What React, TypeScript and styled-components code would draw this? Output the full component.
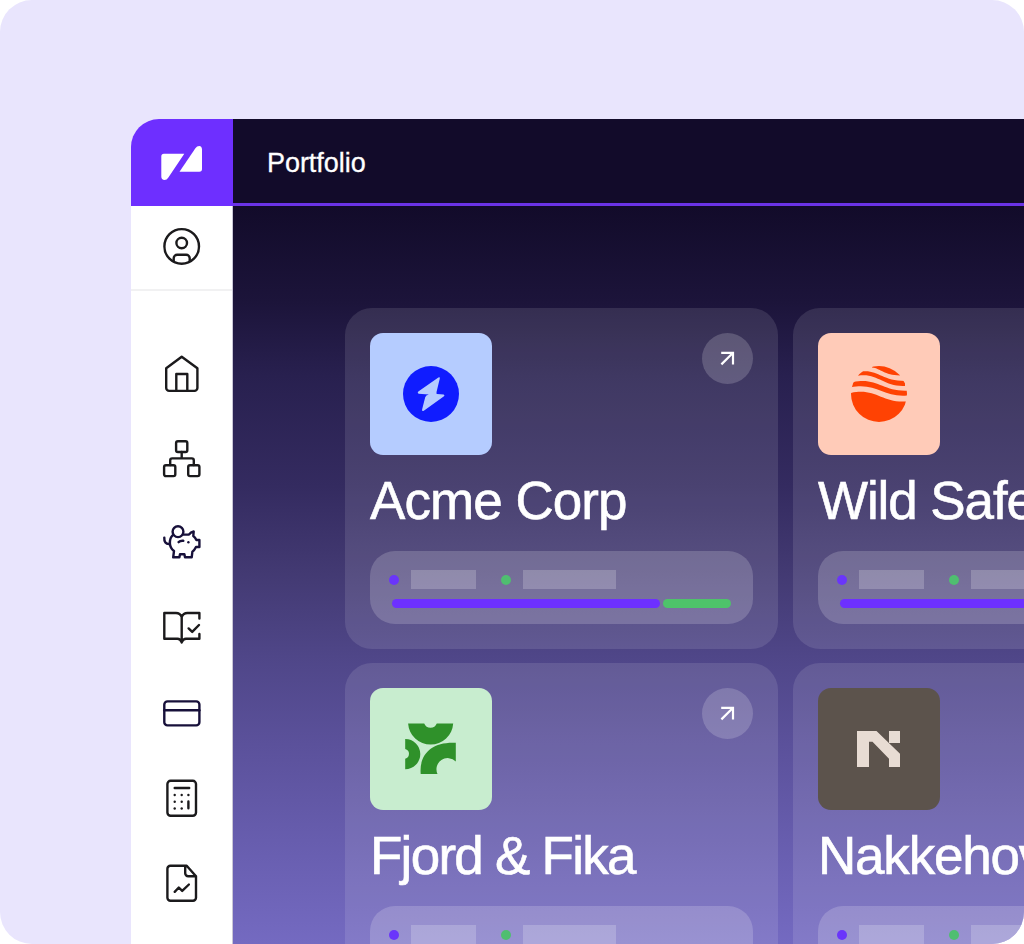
import React from 'react';
import styled, { createGlobalStyle } from 'styled-components';

const GlobalStyle = createGlobalStyle`
  * { box-sizing: border-box; }
  body { margin: 0; background: #fff; font-family: "Liberation Sans", Arial, sans-serif; }
`;

const Stage = styled.main`
  width: 1024px;
  height: 944px;
  padding: 119px 0 0 131px;
  background: #e9e5fd;
  border-radius: 32px;
  overflow: hidden;
`;

const Window = styled.div`
  display: flex;
  width: 1130px;
  height: 825px;
  border-top-left-radius: 28px;
  overflow: hidden;
`;

const Sidebar = styled.aside`
  flex: none;
  width: 102px;
  background: #fff;
  border-right: 1px solid #c9c6d6;
`;

const Brand = styled.div`
  display: flex;
  align-items: center;
  justify-content: center;
  width: 102px;
  height: 87px;
  background: #6e2fff;
`;

const Account = styled.div`
  display: flex;
  justify-content: center;
  height: 85px;
  padding-top: 20px;
  border-bottom: 2px solid #f1f1f2;
`;

const Nav = styled.nav`
  display: flex;
  flex-direction: column;
  align-items: center;
  gap: 45px;
  padding-top: 63px;
`;

const Icon = styled.svg<{ $navy?: boolean }>`
  display: block;
  flex: none;
  width: 40px;
  height: 40px;
  fill: none;
  stroke: ${(p) => (p.$navy ? '#17103a' : '#1b1a1c')};
  stroke-width: 2.4;
  stroke-linecap: round;
  stroke-linejoin: round;
`;

const Main = styled.section`
  flex: 1;
  display: flex;
  flex-direction: column;
`;

const Header = styled.header`
  flex: none;
  display: flex;
  align-items: center;
  height: 87px;
  padding-left: 34px;
  background: #120b2a;
  border-bottom: 3px solid #6a33e6;
`;

const PageTitle = styled.h1`
  margin: 0;
  padding-top: 4px;
  color: #fff;
  font-size: 27px;
  font-weight: 400;
  line-height: 32px;
  letter-spacing: -0.05px;
  -webkit-text-stroke: 0.3px #fff;
`;

const Content = styled.div`
  flex: 1;
  min-height: 0;
  padding: 102px 0 0 112px;
  background: linear-gradient(
    180deg,
    #120b2a 0%,
    #1c143a 13%,
    #28204f 23%,
    #342b60 38%,
    #433a73 50%,
    #4f4688 61%,
    #5b519b 73%,
    #675dae 86%,
    #746ac1 100%
  );
`;

const Grid = styled.div`
  display: grid;
  grid-template-columns: 433px 433px;
  grid-auto-rows: 341px;
  gap: 14px 15px;
`;

const Card = styled.article`
  padding: 25px;
  border-radius: 27px;
  background: rgba(255, 255, 255, 0.11);
`;

const CardTop = styled.div`
  display: flex;
  justify-content: space-between;
  align-items: flex-start;
`;

const Tile = styled.div<{ $color: string }>`
  display: flex;
  align-items: center;
  justify-content: center;
  width: 122px;
  height: 122px;
  border-radius: 13px;
  background: ${(p) => p.$color};
`;

const OpenButton = styled.button`
  display: flex;
  align-items: center;
  justify-content: center;
  width: 51px;
  height: 51px;
  padding: 0;
  border: 0;
  border-radius: 50%;
  background: rgba(255, 255, 255, 0.18);
`;

const CompanyName = styled.h2<{ $tracking: number }>`
  margin: 16px 0 20px;
  color: #fff;
  font-size: 53px;
  font-weight: 400;
  line-height: 60px;
  letter-spacing: ${(p) => p.$tracking}px;
  white-space: nowrap;
  -webkit-text-stroke: 0.6px #fff;
`;

const Meter = styled.div`
  height: 73px;
  padding: 19px 22px 0 19px;
  border-radius: 25px;
  background: rgba(255, 255, 255, 0.18);
`;

const Legend = styled.div`
  display: flex;
  align-items: center;
  height: 19px;
`;

const Dot = styled.span<{ $color: string }>`
  width: 10px;
  height: 10px;
  border-radius: 50%;
  background: ${(p) => p.$color};
`;

const Label = styled.span<{ $width: number; $after?: number }>`
  width: ${(p) => p.$width}px;
  height: 19px;
  margin-left: 12px;
  margin-right: ${(p) => p.$after ?? 0}px;
  background: rgba(255, 255, 255, 0.2);
`;

const Track = styled.div`
  display: flex;
  gap: 3.5px;
  margin: 9.5px 0 0 3px;
`;

const Segment = styled.span<{ $width: number; $color: string }>`
  width: ${(p) => p.$width}px;
  height: 9.5px;
  border-radius: 5px;
  background: ${(p) => p.$color};
`;

const BrandMark = () => (
  <svg width="42" height="36" viewBox="0 0 42 36" fill="#fff">
    <path d="M2.9 8.8H23.3L7.2 32.8Q5.8 35 3.6 35Q.3 34.8.3 31.5V11.4Q.3 8.8 2.9 8.8Z" />
    <path d="M18.5 26.7L34.4 3.3Q36 1 38.2 1Q41 1.3 41 4.6V24.1Q41 26.7 38.4 26.7Z" />
  </svg>
);

const AcmeMark = () => (
  <svg width="56" height="56" viewBox="0 0 56 56">
    <circle cx="28" cy="28" r="28" fill="#101cff" />
    <path
      d="M35.4 11.6Q37.1 10.7 36.8 12.6L33.6 25.8Q33.1 28 34 28.1L40.6 28.5Q42.2 29 41 30.3L20.8 44.8Q18.8 45.8 19.1 43.6L22.2 31.3Q22.8 28.7 25.8 28.4L15.6 27.8Q13.9 27.1 15.3 25.6Z"
      fill="#b5ccff"
    />
  </svg>
);

const WildMark = () => (
  <svg width="56" height="56" viewBox="0 0 56 56" fill="#ff4203">
    <clipPath id="sun"><circle cx="28" cy="28" r="28" /></clipPath>
    <g clipPath="url(#sun)">
      <path d="M21 1.6C30 2.6 33 9.3 49 9.4V-2H21Z" />
      <path d="M9 5.8C27 2.8 30 15 54 15V20C32 21 27 6.6 7 9.8Z" />
      <path d="M2 16.2C26 11 31 25.5 56 24.7V29.6C32 31.5 26 16.5 0 21.3Z" />
      <path d="M0 26.9C25 21.5 31 37.5 56 35.4V56H0Z" />
    </g>
  </svg>
);

const FjordMark = () => (
  <svg width="52" height="52" viewBox="0 0 52 52" fill="#2f912a">
    <path d="M3.1.5H19.2A6.8 6.8 0 0 0 31.8.5H48.2A22.6 22.6 0 0 1 3.1.5Z" />
    <path d="M.2 16A15.1 15.1 0 0 1 .2 46.2V35.7A5 5 0 0 0 .2 26Z" />
    <path d="M15.7 51C14 32 26 18.6 50.8 19.8V38.6A11.2 11.2 0 0 0 32.5 51Z" />
  </svg>
);

const NakkehovMark = () => (
  <svg width="44" height="36" viewBox="0 0 44 36" fill="#e8dcd3">
    <path d="M0 0H19.5L43 22.8V36H32V27.7L15.5 10.8H12V36H0Z" />
    <path d="M32 0H43V12H32Z" />
  </svg>
);

const ArrowIcon = () => (
  <svg width="15" height="15" viewBox="0 0 15 15" fill="none" stroke="#fff" strokeWidth="2.2">
    <path d="M1.4 13.4L12.8 2M1.2 1.8H13V13.6" />
  </svg>
);

const calcDots = [
  [12.7, 16], [19.7, 16], [26.4, 16],
  [12.7, 22.7], [19.7, 22.7],
  [12.7, 29.4], [19.7, 29.4],
];

const companies = [
  { name: 'Acme Corp', tracking: -0.95, color: '#b5ccff', mark: <AcmeMark /> },
  { name: 'Wild Safety', tracking: -1.1, color: '#ffcbb8', mark: <WildMark /> },
  { name: 'Fjord & Fika', tracking: -1.75, color: '#c8edcf', mark: <FjordMark /> },
  { name: 'Nakkehov', tracking: -1.2, color: '#5c534c', mark: <NakkehovMark /> },
];

export default function App() {
  return (
    <>
      <GlobalStyle />
      <Stage>
        <Window>
          <Sidebar>
            <Brand><BrandMark /></Brand>
            <Account>
              <Icon viewBox="0 0 40 40">
                <circle cx="19.7" cy="20.4" r="17.3" />
                <circle cx="19.7" cy="17" r="5.3" />
                <path d="M11.7 35v-2.8a3.5 3.5 0 0 1 3.5-3.5h9a3.5 3.5 0 0 1 3.5 3.5V35" />
              </Icon>
            </Account>
            <Nav>
              <Icon viewBox="0 0 40 40">
                <path d="M19.7 2.7L35.4 14.3V33.9a3 3 0 0 1-3 3H7.2a3 3 0 0 1-3-3V14.3ZM14.3 36.9V20H25.3V36.9" />
              </Icon>
              <Icon viewBox="0 0 40 40">
                <rect x="14.1" y="2.2" width="11.2" height="10.8" rx="1.8" />
                <rect x="2.1" y="26.3" width="11.2" height="10.8" rx="1.8" />
                <rect x="26.2" y="26.3" width="11.2" height="10.8" rx="1.8" />
                <path d="M19.7 13V19.4M8.2 26V21.4a2 2 0 0 1 2-2H29.8a2 2 0 0 1 2 2V26" />
              </Icon>
              <Icon $navy viewBox="0 0 40 40">
                <circle cx="16" cy="7.7" r="5.4" />
                <path d="M10.6 11.3C8.5 13.2 7.8 16 7.9 19.2C8 22.8 9.3 25 12 27L11.2 33.3H17.4L18 30.2H22.4L23 33.3H29.7L30.4 27.7C32.2 26.5 33 25 34 23H37.4V16H34.4C33.6 14.2 32.8 13.1 31.3 12L31.7 7.4C29.6 8 28 9.3 27 10.6H21.3M2.3 13.6C2 17.4 3.7 20.6 7.8 20M16.6 18.2C17.8 17 19.5 16.6 21.3 16.8" />
                <path d="M26.4 18.2V18.3" />
              </Icon>
              <Icon viewBox="0 0 40 40">
                <path d="M19.7 32.8V8C18.6 5.2 16.8 4 14 4H2.3V29.7H15.5C17.6 29.7 18.8 30.7 19.7 33.5C20.6 30.7 21.8 29.7 24 29.7H37.4V25M19.7 8C20.8 5.2 22.6 4 25.4 4H37.4V9.5M26.6 19.4L30.2 22.9L37 16" />
              </Icon>
              <Icon $navy viewBox="0 0 40 40">
                <rect x="2.3" y="7.4" width="35.1" height="24" rx="3.2" />
                <path d="M2.3 16.3H37.4" />
              </Icon>
              <Icon viewBox="0 0 40 40">
                <rect x="5.4" y="1.8" width="28.6" height="35" rx="3.2" />
                <path d="M12.7 9H27.2M26.4 22.5V29.3" />
                {calcDots.map(([x, y]) => (
                  <path key={`${x}-${y}`} d={`M${x} ${y}v.1`} />
                ))}
              </Icon>
              <Icon viewBox="0 0 40 40">
                <path d="M23.5 1.8H8.4a3 3 0 0 0-3 3V33.8a3 3 0 0 0 3 3H31a3 3 0 0 0 3-3V12.2L24.7 1.8ZM23.2 2V9.2a3 3 0 0 0 3 3H34M12.7 27.8L16.8 23.5L20.2 26.9L26.9 20.5" />
              </Icon>
            </Nav>
          </Sidebar>
          <Main>
            <Header><PageTitle>Portfolio</PageTitle></Header>
            <Content>
              <Grid>
                {companies.map((c) => (
                  <Card key={c.name}>
                    <CardTop>
                      <Tile $color={c.color}>{c.mark}</Tile>
                      <OpenButton aria-label="Open"><ArrowIcon /></OpenButton>
                    </CardTop>
                    <CompanyName $tracking={c.tracking}>{c.name}</CompanyName>
                    <Meter>
                      <Legend>
                        <Dot $color="#6a35fb" />
                        <Label $width={65} $after={25} />
                        <Dot $color="#4fbe70" />
                        <Label $width={93} />
                      </Legend>
                      <Track>
                        <Segment $width={267.5} $color="#6d30ff" />
                        <Segment $width={68} $color="#4ec36a" />
                      </Track>
                    </Meter>
                  </Card>
                ))}
              </Grid>
            </Content>
          </Main>
        </Window>
      </Stage>
    </>
  );
}
